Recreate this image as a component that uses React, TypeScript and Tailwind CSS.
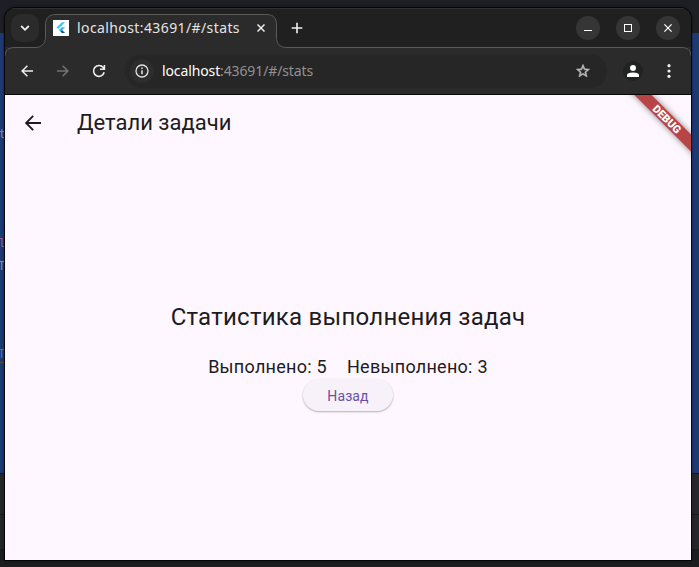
import React from 'react';

function Backdrop() {
  return (
    <div className="absolute inset-0 flex flex-col bg-[#1b1d1e] font-['Liberation_Mono',monospace] text-[12px]">
      <div className="h-[33px] bg-[#1d1f24]" />
      <div className="relative h-[440px] bg-[#1d3a75]">
        <span className="absolute -left-px top-[94px] leading-4 text-[#8b8c93]">t</span>
        <span className="absolute -left-[2px] top-[203px] leading-4 text-[#95609a]">l</span>
        <span className="absolute -left-[2px] top-[226px] leading-4 text-[#7c9db0]">T</span>
        <span className="absolute -left-[2px] top-[314px] leading-4 text-[#2e7bd0]">T</span>
        <svg className="absolute left-0 top-[328px]" width="4" height="3" viewBox="0 0 4 3" fill="none" stroke="#5b553f"><path d="m0 2 1.5-1.5L3 2l1-1" /></svg>
      </div>
      <div className="h-px bg-[#121315]" />
      <div className="h-[40px] bg-[#25272a]" />
      <div className="h-px bg-[#17181a]" />
      <div className="h-[34px] bg-[#242629]" />
    </div>
  );
}

function FlutterLogo() {
  return (
    <svg width="16" height="16" viewBox="0 0 16 16" className="shrink-0">
      <rect width="16" height="16" fill="#fff" />
      <path d="M8.9 2.2h3.2L5.2 9.1 3.6 7.5z" fill="#42c3f5" />
      <path d="M8.9 7.3h3.2L9.4 10l-2 1.6L5.8 10z" fill="#35b8f1" />
      <path d="m7.4 11.6 1.6-1.6 3.1 3.1H8.9z" fill="#01579b" />
    </svg>
  );
}

function TabStrip() {
  return (
    <div className="relative flex h-[39px] shrink-0 items-center bg-[#202020] shadow-[inset_0_1px_0_#303030]">
      <svg className="absolute left-0 top-0 overflow-visible" width="686" height="40" viewBox="0 0 686 40" fill="none">
        <path d="M0 48C0 42 4 39.5 10 39.5H30C36 39.5 40.5 36 40.5 29V17C40.5 10 44 6.5 51 6.5H262C269 6.5 271.5 11 271.5 17V29C271.5 36 275 39.5 282 39.5H676C682 39.5 686 42 686 48" fill="#2b2b2b" stroke="#5b5b5b" />
      </svg>
      <div className="relative ml-[6px] flex h-7 w-7 items-center justify-center rounded-[10px] bg-[#2b2b2b]">
        <svg width="10" height="8" viewBox="0 0 10 8" fill="none" stroke="#f1f1f1" strokeWidth="1.8"><path d="m1.2 2 3.8 3.8L8.8 2" /></svg>
      </div>
      <div className="relative ml-[14px] flex w-[229px] items-center">
        <FlutterLogo />
        <span className="ml-[8px] w-[176px] whitespace-nowrap font-['Noto_Sans',sans-serif] text-[14px] leading-5 tracking-[0.4px] text-[#e5e5e5]">localhost:43691/#/stats</span>
        <svg width="8" height="8" viewBox="0 0 8 8" stroke="#eeeeee" strokeWidth="1.5" className="ml-[4px]"><path d="m.5.5 7 7m0-7-7 7" /></svg>
      </div>
      <svg width="12" height="12" viewBox="0 0 12 12" stroke="#f1f1f1" strokeWidth="1.6" className="relative ml-[9px]"><path d="M6 .7v10.6M.7 6h10.6" /></svg>
      <div className="relative ml-auto mr-[11px] flex gap-4">
        <div className="flex h-6 w-6 items-center justify-center rounded-full bg-[#353535]">
          <div className="mt-[5px] h-px w-2 bg-white" />
        </div>
        <div className="flex h-6 w-6 items-center justify-center rounded-full bg-[#353535]">
          <div className="h-2 w-2 border border-white" />
        </div>
        <div className="flex h-6 w-6 items-center justify-center rounded-full bg-[#353535]">
          <svg width="8" height="8" viewBox="0 0 8 8" stroke="#fff" strokeWidth="1.2"><path d="m.4.4 7.2 7.2m0-7.2L.4 7.6" /></svg>
        </div>
      </div>
    </div>
  );
}

function Toolbar() {
  return (
    <div className="relative flex h-[48px] shrink-0 items-center border-b border-[#080808] pl-[16px] text-[#eeeeee]">
      <svg width="12" height="12" viewBox="0 0 12 12" fill="none" stroke="currentColor" strokeWidth="1.5"><path d="M12 6H1m5.4-5.3L1.1 6l5.3 5.3" /></svg>
      <svg width="12" height="12" viewBox="0 0 12 12" fill="none" stroke="#737373" strokeWidth="1.5" className="ml-6"><path d="M0 6h11M5.6.7 10.9 6l-5.3 5.3" /></svg>
      <svg width="14" height="14" viewBox="0 0 14 14" fill="none" stroke="currentColor" strokeWidth="1.6" className="ml-[23px]"><path d="M12.2 8.3A5.4 5.4 0 1 1 11.2 3.6L12.4 5M12.4 1v4.3H8" /></svg>
      <div className="ml-[19px] flex h-[34px] w-[482px] items-center rounded-full bg-[#262626] pl-[5px] pr-[16px]">
        <div className="flex h-6 w-6 items-center justify-center rounded-full bg-[#2d2d2d]">
          <svg width="14" height="14" viewBox="0 0 14 14" fill="none" stroke="#e4e4e4" strokeWidth="1.3"><circle cx="7" cy="7" r="6" /><path d="M7 6.2v4M7 3.6v1.5" strokeWidth="1.5" /></svg>
        </div>
        <span className="ml-[8px] whitespace-nowrap font-['Noto_Sans',sans-serif] text-[14px] leading-5 tracking-[-0.12px] text-[#929292]"><span className="text-white">localhost</span>:43691/#/stats</span>
        <svg width="16" height="16" viewBox="0 0 24 24" fill="#bcbcbc" className="ml-auto"><path d="m22 9.24-7.19-.62L12 2 9.19 8.63 2 9.24l5.46 4.73L5.82 21 12 17.27 18.18 21l-1.63-7.03L22 9.24zM12 15.4l-3.76 2.27 1-4.28-3.32-2.88 4.38-.38L12 6.1l1.71 4.04 4.38.38-3.32 2.88 1 4.28L12 15.4z" stroke="#bcbcbc" strokeWidth=".8" /></svg>
      </div>
      <div className="ml-[16px] flex h-5 w-5 items-center justify-center rounded-full bg-[#1f2322]">
        <svg width="12" height="12" viewBox="0 0 12 12" fill="white"><circle cx="6" cy="3" r="3" /><path d="M0 12V10Q0 7.5 6 7.5T12 10V12z" /></svg>
      </div>
      <svg width="4" height="16" viewBox="0 0 4 16" fill="#eeeeee" className="ml-[24px]"><circle cx="2" cy="2.7" r="1.6" /><circle cx="2" cy="8" r="1.6" /><circle cx="2" cy="13.3" r="1.6" /></svg>
    </div>
  );
}

export default function App() {
  return (
    <div className="relative h-[567px] w-[699px] overflow-hidden bg-[#1b1d1e]">
      <Backdrop />
      <div className="relative px-[5px] pt-[8px]">
        <div className="flex h-[552px] w-[686px] flex-col overflow-hidden rounded-t-[11px] bg-[#2b2b2b] shadow-[0_0_0_1px_#060608,0_0_3px_1px_rgba(0,0,0,0.4)]">
          <TabStrip />
          <Toolbar />
          <main className="relative flex min-h-0 flex-1 flex-col overflow-hidden bg-[#fef7ff] font-[Roboto,sans-serif] text-[#1d1b20]">
            <header className="flex h-14 shrink-0 items-center pl-[20px]">
              <svg width="16" height="16" viewBox="0 0 16 16" fill="none" stroke="currentColor" strokeWidth="1.8"><path d="M16 8H1.3M8.2.8 1.1 8l7.1 7.2" /></svg>
              <h1 className="ml-[36px] text-[22px] font-normal leading-7">Детали задачи</h1>
            </header>
            <section className="flex flex-col items-center pt-[149px]">
              <h2 className="whitespace-nowrap text-[24px] font-normal leading-[34px] tracking-[0.25px]">Статистика выполнения задач</h2>
              <div className="mt-[20px] flex gap-5 whitespace-nowrap text-[18px] leading-[26px] tracking-[0.27px]">
                <span>Выполнено: 5</span>
                <span>Невыполнено: 3</span>
              </div>
              <button className="-mt-px h-8 w-[90px] rounded-full bg-[#f7f2fa] text-[14px] leading-5 tracking-[0.1px] text-[#6750a4] shadow-[0_1px_2px_rgba(0,0,0,0.3)]"><span className="relative top-px">Назад</span></button>
            </section>
            <div className="absolute right-[-36px] top-[18px] flex h-[12px] w-[120px] rotate-45 items-center justify-center bg-[#b74447] text-[11px] font-black leading-none text-white shadow-[0_0_6px_rgba(0,0,0,0.5)]">DEBUG</div>
          </main>
        </div>
      </div>
    </div>
  );
}
